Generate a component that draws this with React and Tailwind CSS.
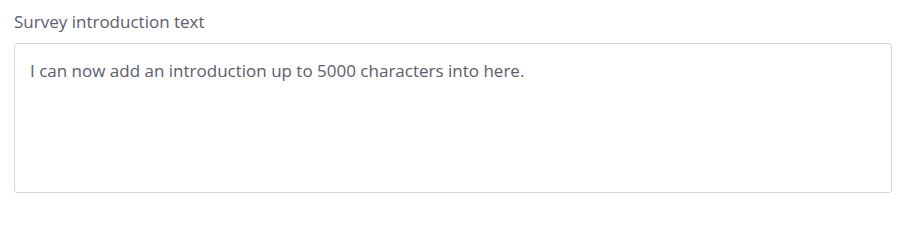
export default function App() {
  return (
    <div className="w-[902px] h-[202px] bg-white px-[14px] pt-[9px] font-['Open_Sans',sans-serif]">
      <label className="block text-[17px] leading-[25px] text-[#5c5c6b]">Survey introduction text</label>
      <div className="mt-[9px] h-[150px] w-[878px] rounded-[3px] border border-[#d6d5e0] px-[15px] py-[14px] text-[17px] leading-[25px] text-[#5c5c6b]">
        I can now add an introduction up to 5000 characters into here.
      </div>
    </div>
  );
}
